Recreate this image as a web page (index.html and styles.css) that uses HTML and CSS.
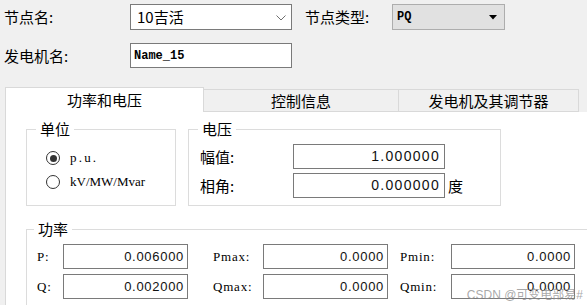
FILE: index.html
```html
<!DOCTYPE html>
<html lang="zh">
<head>
<meta charset="utf-8">
<link rel="stylesheet" href="styles.css">
</head>
<body>
<div class="top">
  <div class="row">
    <span class="lbl lbl-a">节点名:</span>
    <div class="combo edit"><span class="val">10吉活</span>
      <svg class="chev" width="10" height="6" viewBox="0 0 10 6"><path d="M0.5 0.5 L5 5 L9.5 0.5" fill="none" stroke="#707070" stroke-width="1"/></svg>
    </div>
    <span class="lbl lbl-b">节点类型:</span>
    <div class="combo ro"><span class="mono-b">PQ</span>
      <svg class="tri" width="8" height="5" viewBox="0 0 8 5"><path d="M0 0 H8 L4 4.5 Z" fill="#000"/></svg>
    </div>
  </div>
  <div class="row row2">
    <span class="lbl lbl-a">发电机名:</span>
    <div class="field"><span class="mono-b">Name_15</span></div>
  </div>
</div>

<div class="tabs">
  <div class="strip">
    <div class="tab t1 active">功率和电压</div>
    <div class="tab t2">控制信息</div>
    <div class="tab t3">发电机及其调节器</div>
  </div>
  <div class="panel">
    <div class="grp-row">
      <div class="group g-unit">
        <span class="gtitle">单位</span>
        <div class="radio"><span class="circle on"></span><span class="serif pu">p.u.</span></div>
        <div class="radio"><span class="circle"></span><span class="serif">kV/MW/Mvar</span></div>
      </div>
      <div class="group g-volt">
        <span class="gtitle">电压</span>
        <div class="vrow"><span class="vlbl">幅值:</span><div class="num big">1.000000</div></div>
        <div class="vrow"><span class="vlbl">相角:</span><div class="num big">0.000000</div><span class="unit">度</span></div>
      </div>
    </div>
    <div class="group g-power">
      <span class="gtitle gt-p">功率</span>
      <div class="pgrid">
        <span class="plbl">P:</span><div class="num">0.006000</div>
        <span class="plbl pl2">Pmax:</span><div class="num">0.0000</div>
        <span class="plbl pl3">Pmin:</span><div class="num w124">0.0000</div>
        <span class="plbl">Q:</span><div class="num">0.002000</div>
        <span class="plbl pl2">Qmax:</span><div class="num">0.0000</div>
        <span class="plbl pl3">Qmin:</span><div class="num w124">0.0000</div>
      </div>
    </div>
  </div>
</div>
<div class="wm">CSDN @可变电部易#</div>
</body>
</html>
```

FILE: styles.css
```css
html, body {
  margin: 0;
  padding: 0;
}
body {
  width: 587px;
  height: 305px;
  overflow: hidden;
  background: #f0f0f0;
  font-family: "Noto Sans CJK SC", "Liberation Sans", sans-serif;
  font-size: 15px;
  line-height: 18px;
  color: #000;
  position: relative;
}

/* top form */
.top {
  padding: 4px 0 0 4px;
}
.row {
  display: flex;
  align-items: center;
  height: 26px;
}
.row2 {
  margin-top: 13px;
  height: 25px;
}
.lbl-a {
  width: 126px;
}
.lbl-b {
  margin-left: 13px;
  width: 87px;
}
.combo {
  box-sizing: border-box;
  height: 26px;
  display: flex;
  align-items: center;
  justify-content: space-between;
}
.combo.edit {
  width: 162px;
  background: #fff;
  border: 1px solid #7a7a7a;
  padding: 0 5px 0 6px;
}
.combo.edit .chev {
  margin-top: 1px;
}
.combo.ro {
  width: 113px;
  background: #e1e1e1;
  border: 1px solid #adadad;
  padding: 0 7px 0 4px;
}
.field {
  box-sizing: border-box;
  width: 162px;
  height: 25px;
  background: #fff;
  border: 1px solid #7a7a7a;
  padding-left: 3px;
  display: flex;
  align-items: center;
}
.mono-b {
  font-family: "Liberation Mono", monospace;
  font-weight: bold;
  font-size: 12px;
}

/* tabs */
.tabs {
  margin: 19px 0 0 5px;
  width: 582px;
}
.strip {
  display: flex;
  align-items: flex-end;
  height: 25px;
}
.tab {
  box-sizing: border-box;
  height: 23px;
  background: #f0f0f0;
  border: 1px solid #d9d9d9;
  border-left: none;
  text-align: center;
  line-height: 21px;
}
.tab.t1 { width: 199px; }
.tab.t2 { width: 195px; }
.tab.t3 { width: 180px; }
.tab.active {
  height: 25px;
  background: #fff;
  border-left: 1px solid #d9d9d9;
  border-bottom: none;
  line-height: 24px;
}
.panel {
  box-sizing: border-box;
  background: #fff;
  border-left: 1px solid #d9d9d9;
  height: 193px;
  padding: 17px 0 0 20px;
}

/* groups */
.grp-row {
  display: flex;
  gap: 12px;
}
.group {
  position: relative;
  box-sizing: border-box;
  border: 1px solid #dcdcdc;
}
.gtitle {
  position: absolute;
  top: -10px;
  left: 9px;
  padding: 0 4px;
  background: #fff;
  line-height: 18px;
}
.gt-p {
  left: 7px;
}
.g-unit {
  width: 150px;
  height: 77px;
  padding: 16px 0 0 19px;
}
.radio {
  display: flex;
  align-items: center;
  height: 24px;
}
.circle {
  box-sizing: border-box;
  width: 14px;
  height: 14px;
  border: 1px solid #333;
  border-radius: 50%;
  background: #fff;
  margin-right: 10px;
  display: flex;
  align-items: center;
  justify-content: center;
}
.circle.on::after {
  content: "";
  width: 7px;
  height: 7px;
  border-radius: 50%;
  background: #333;
}
.serif {
  font-family: "Liberation Serif", serif;
  font-size: 13px;
}
.serif.pu {
  letter-spacing: 2.2px;
}
.g-volt {
  width: 313px;
  height: 77px;
  padding: 14px 0 0 11px;
  display: flex;
  flex-direction: column;
  gap: 4px;
}
.vrow {
  display: flex;
  align-items: center;
  height: 25px;
}
.vlbl {
  width: 93px;
}
.unit {
  margin-left: 3px;
}
.num {
  box-sizing: border-box;
  width: 125px;
  height: 25px;
  border: 1px solid #7a7a7a;
  background: #fff;
  text-align: right;
  font-family: "Liberation Sans", sans-serif;
  font-size: 13px;
  letter-spacing: 0.7px;
  line-height: 23px;
  padding-right: 3px;
  color: #111;
}
.num.big {
  width: 152px;
  font-size: 14px;
  letter-spacing: 1.3px;
  padding-right: 4px;
}
.num.w124 {
  width: 124px;
}
.g-power {
  margin-top: 23px;
  width: 561px;
  height: 76px;
  border-right: none;
  border-bottom: none;
  padding: 14px 0 0 10px;
}
.pgrid {
  display: grid;
  grid-template-columns: 26px 125px 75px 125px 63px 124px;
  row-gap: 5px;
  align-items: center;
}
.plbl {
  font-family: "Liberation Serif", serif;
  font-size: 13px;
  letter-spacing: 0.8px;
}
.pl2 { padding-left: 25px; }
.pl3 { padding-left: 12px; }

.wm {
  position: absolute;
  right: 4px;
  bottom: 3px;
  font-family: "Liberation Sans", "Noto Sans CJK SC", sans-serif;
  font-size: 12px;
  line-height: 14px;
  color: rgba(140, 140, 140, 0.75);
}
```
